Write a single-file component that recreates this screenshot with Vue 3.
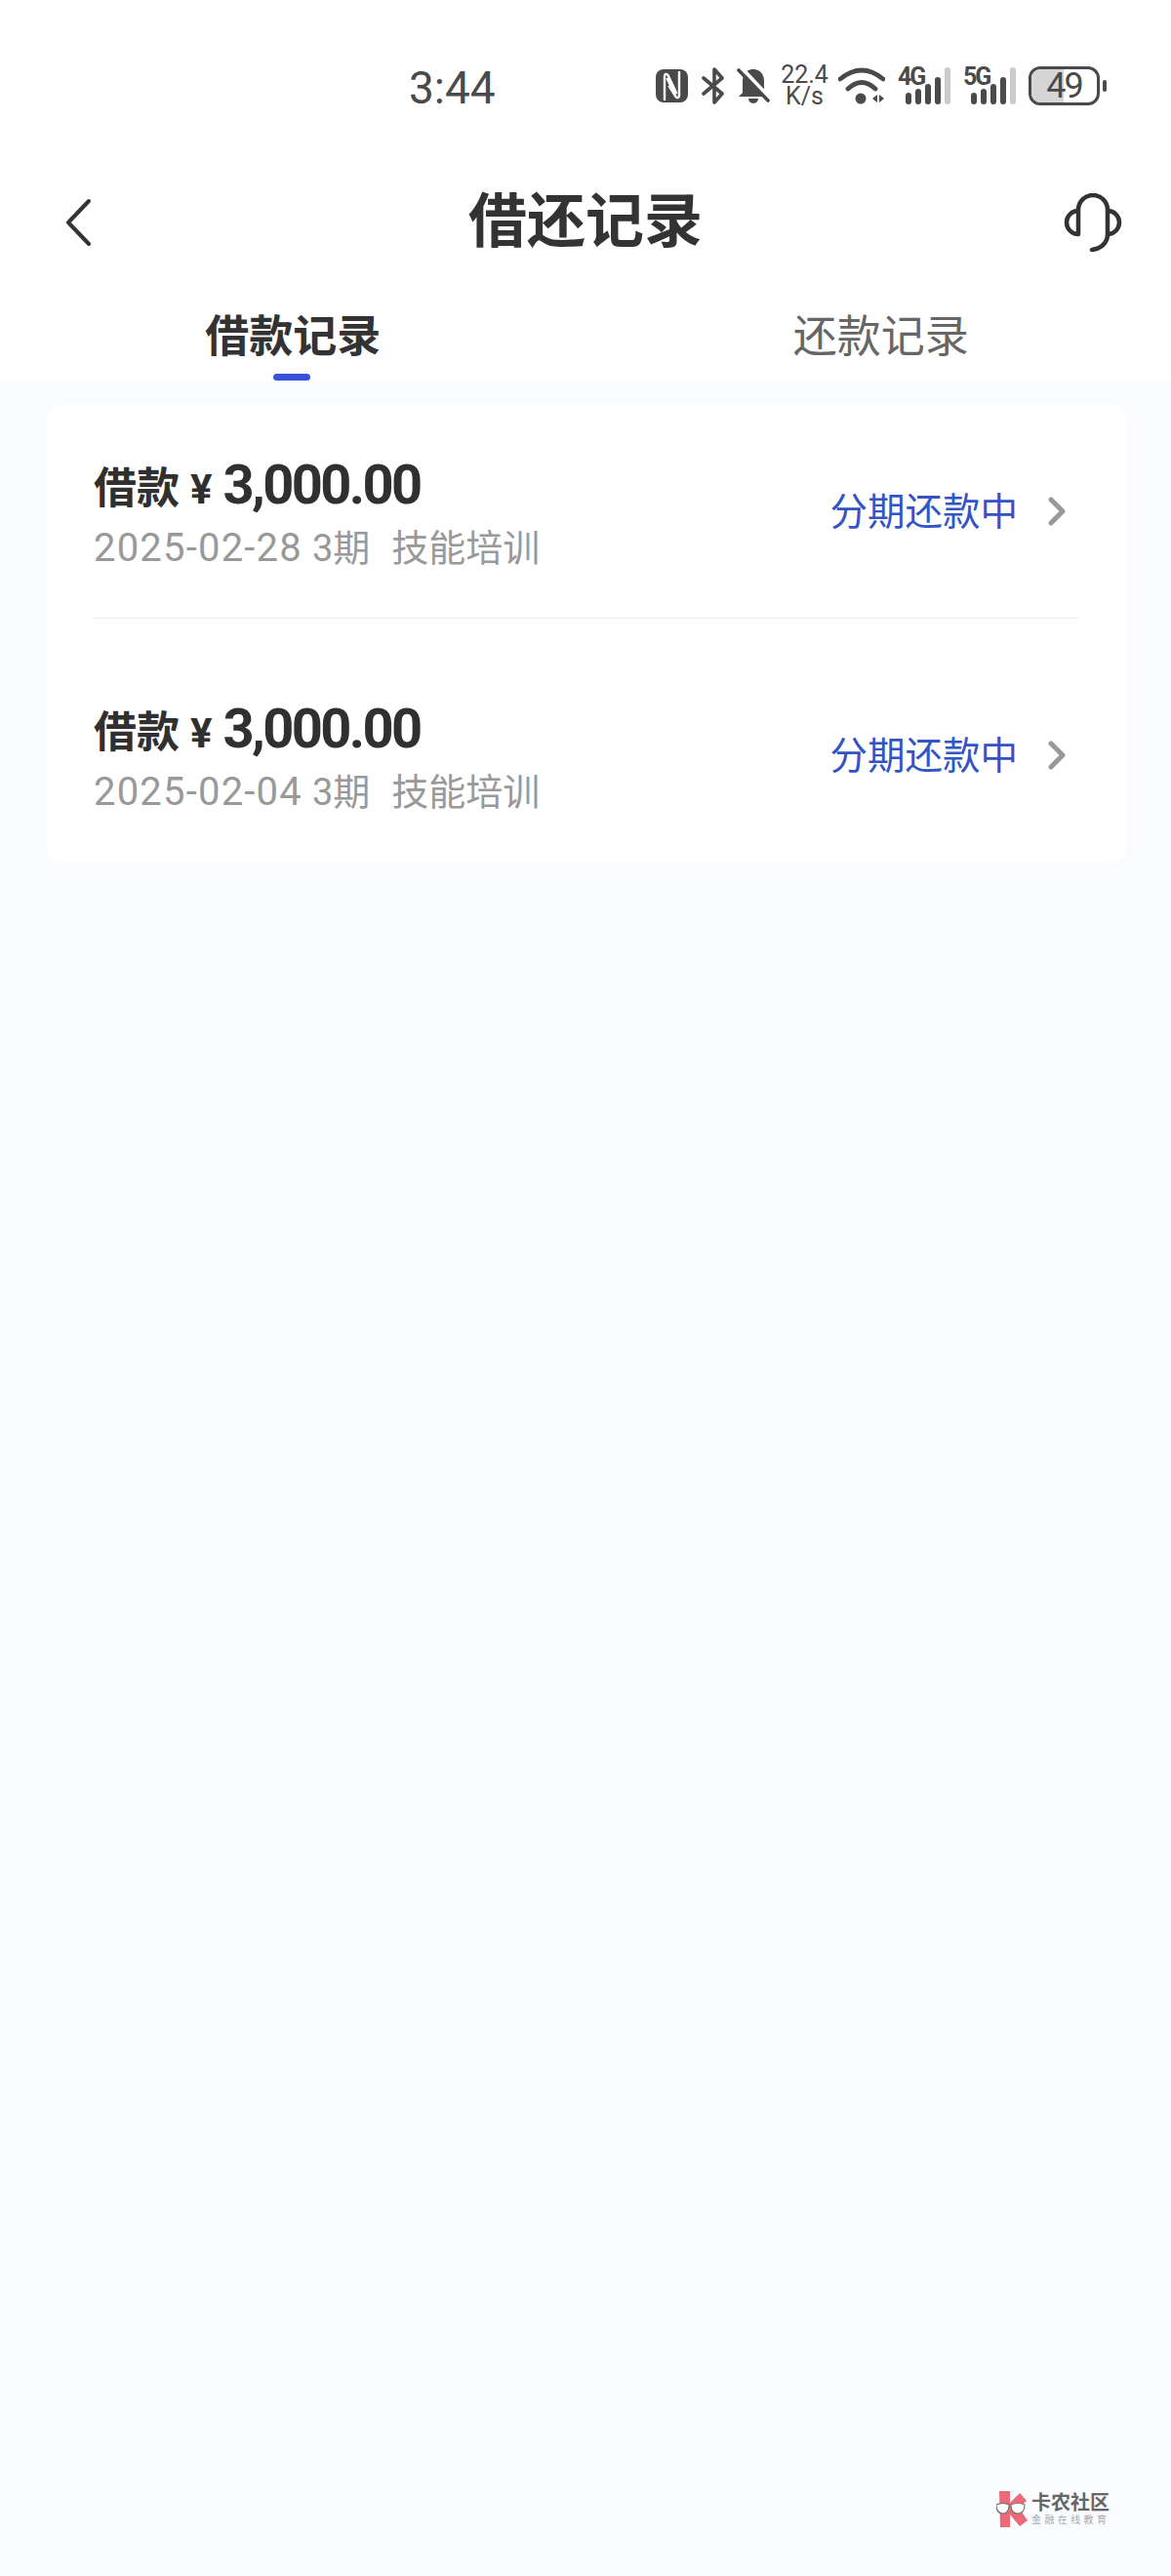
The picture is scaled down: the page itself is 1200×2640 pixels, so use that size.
<template>
  <div class="page">
    <header class="head">
      <div class="status">
        <span class="clock">3:44</span>
        <div class="status-icons">
          <!-- nfc -->
          <svg class="nfc" width="33" height="36" viewBox="0 0 33 36">
            <rect x="0" y="1" width="33" height="34" rx="8" fill="#4a4a4a" />
            <path d="M9 33V8c0-2 2-3 3.500-1l9 19M24 3v25c0 2-2 3-3.500 1l-9-19" fill="none" stroke="#fff" stroke-width="2.400" />
            <path d="M13 18l7 11M13 12l7 11" fill="none" stroke="#fff" stroke-width="1.500" />
          </svg>
          <!-- bluetooth -->
          <svg width="23" height="38" viewBox="0 0 23 38">
            <path d="M2 11l19 16-8 9V2l8 9L2 27" fill="none" stroke="#4a4a4a" stroke-width="3.600" stroke-linejoin="round" stroke-linecap="round" />
          </svg>
          <!-- muted bell -->
          <svg class="bell" width="34" height="38" viewBox="0 0 34 38">
            <path d="M17 2c7 0 11 5 11 12v12l4 4H2l4-4V14C6 7 10 2 17 2z" fill="#4a4a4a" />
            <path d="M12 32h10a5 5 0 0 1-10 0z" fill="#4a4a4a" />
            <path d="M1 -2l32 34" stroke="#fff" stroke-width="6" />
            <path d="M2 3l30 31" stroke="#4a4a4a" stroke-width="3.600" stroke-linecap="round" />
          </svg>
          <div class="speed"><span>22.4</span><span>K/s</span></div>
          <!-- wifi -->
          <svg class="wifi" width="48" height="38" viewBox="0 0 48 38">
            <path d="M2 12Q24 -6 46 12M10 22Q24 9 38 22" fill="none" stroke="#4a4a4a" stroke-width="4.800" stroke-linecap="round" />
            <circle cx="23" cy="32" r="5.500" fill="#4a4a4a" />
            <path d="M35 32l5-4v8zM42 28l5 4-5 4z" fill="#4a4a4a" />
          </svg>
          <div v-for="net in networks" :key="net" class="signal">
            <span class="net">{{ net }}</span>
            <svg width="46" height="38" viewBox="0 0 46 38">
              <rect x="0" y="26" width="6" height="12" rx="3" fill="#4a4a4a" />
              <rect x="10" y="22" width="6" height="16" rx="3" fill="#4a4a4a" />
              <rect x="20" y="17" width="6" height="21" rx="3" fill="#4a4a4a" />
              <rect x="30" y="10" width="6" height="28" rx="3" fill="#4a4a4a" />
              <rect x="40" y="0" width="6" height="38" rx="3" fill="#cbcbcb" />
            </svg>
          </div>
          <div class="battery">
            <div class="battery-body">
              <div class="battery-level"></div>
              <span class="battery-text">49</span>
            </div>
            <div class="battery-tip"></div>
          </div>
        </div>
      </div>

      <div class="nav">
        <svg class="back" width="30" height="50" viewBox="0 0 30 50">
          <path d="M25 3L4 25l21 22" fill="none" stroke="#333" stroke-width="4" stroke-linecap="round" stroke-linejoin="round" />
        </svg>
        <h1 class="title">借还记录</h1>
        <svg class="service" width="60" height="60" viewBox="0 0 60 60">
          <path d="M15 42V17a15 15 0 0 1 30 0v25c0 9-7 15-16 16" fill="none" stroke="#333" stroke-width="4.500" stroke-linecap="round" />
          <path d="M15 18a12 12 0 0 0 0 24M45 18a12 12 0 0 1 0 24" fill="none" stroke="#333" stroke-width="4.500" />
        </svg>
      </div>

      <div class="tabs">
        <div class="tab active">借款记录<i class="indicator"></i></div>
        <div class="tab second">还款记录</div>
      </div>
    </header>

    <main class="body">
      <div class="card">
        <div v-for="item in records" :key="item.date" class="row">
          <div class="info">
            <div class="amount">
              <span class="label">借款</span>
              <span class="yen">¥</span>
              <span class="money">3,000.00</span>
            </div>
            <div class="meta">
              <span class="date">{{ item.date }}</span>
              <span class="term">3期</span>
              <span class="purpose">技能培训</span>
            </div>
          </div>
          <div class="state">分期还款中</div>
          <svg class="arrow" width="20" height="32" viewBox="0 0 20 32">
            <path d="M4 4l12 12L4 28" fill="none" stroke="#999" stroke-width="5" stroke-linecap="round" stroke-linejoin="round" />
          </svg>
        </div>
      </div>

      <div class="watermark">
        <svg width="32" height="38" viewBox="0 0 32 38">
          <path d="M3 1h11v12L24 3l7 8-8 7 9 13-8 6-10-12v13H4z" fill="#ec6a77" />
          <path d="M0 15c4-2 9-2 13 0 0 6-2 9-6 9s-7-3-7-9zM15 15c4-2 10-2 14 0 0 6-3 9-7 9s-7-3-7-9z" fill="#fff" stroke="#777" stroke-width="1.200" />
        </svg>
        <div class="mark-text">
          <span class="mark-name">卡农社区</span>
          <span class="mark-sub">金融在线教育</span>
        </div>
      </div>
    </main>
  </div>
</template>

<script setup>
const networks = ['4G', '5G']
const records = [{ date: '2025-02-28' }, { date: '2025-02-04' }]
</script>

<style>
html,
body {
  margin: 0;
  background: #f9fbfe;
}
</style>

<style scoped>
.page {
  width: 1200px;
  height: 2640px;
  display: flex;
  flex-direction: column;
  background: #f9fbfe;
  font-family: "Roboto", "Noto Sans CJK SC", sans-serif;
  color: #333;
  overflow: hidden;
}

.head {
  background: #fff;
  height: 390px;
  flex: none;
}

.status {
  height: 170px;
  display: flex;
  align-items: flex-start;
  padding: 60px 66px 0 419px;
  box-sizing: border-box;
}

.clock {
  font-size: 46px;
  line-height: 60px;
  color: #4a4a4a;
}

.status-icons {
  margin-left: auto;
  margin-top: -2px;
  height: 60px;
  display: flex;
  align-items: center;
  gap: 13px;
}

.nfc {
  margin-right: 1px;
}

.bell {
  margin-right: -2px;
}

.wifi {
  margin-left: -3px;
}

.speed {
  display: flex;
  flex-direction: column;
  align-items: center;
  font-size: 25px;
  line-height: 22px;
  color: #4a4a4a;
  width: 49px;
}

.signal {
  position: relative;
  width: 54px;
  height: 38px;
  display: flex;
  justify-content: flex-end;
}

.net {
  position: absolute;
  left: 0;
  top: -1px;
  font-size: 25px;
  font-weight: 700;
  line-height: 22px;
  letter-spacing: -2px;
  color: #4a4a4a;
}

.battery {
  display: flex;
  align-items: center;
  gap: 3px;
}

.battery-body {
  position: relative;
  width: 73px;
  height: 40px;
  border: 3px solid #4a4a4a;
  border-radius: 12px;
  box-sizing: border-box;
  overflow: hidden;
  display: flex;
  align-items: center;
  justify-content: center;
}

.battery-level {
  position: absolute;
  left: 0;
  top: 0;
  bottom: 0;
  width: 49%;
  background: #d5d5d5;
}

.battery-text {
  position: relative;
  font-size: 36px;
  line-height: 34px;
  letter-spacing: -2px;
  color: #4a4a4a;
}

.battery-tip {
  width: 4px;
  height: 12px;
  border-radius: 2px;
  background: #4a4a4a;
}

.nav {
  height: 100px;
  margin-top: 8px;
  display: grid;
  grid-template-columns: 1fr auto 1fr;
  align-items: center;
  padding: 0 50px;
}

.back {
  margin-left: 16px;
}

.service {
  justify-self: end;
}

.title {
  margin: 0;
  font-size: 60px;
  font-weight: 700;
  line-height: 100px;
  color: #333;
}

.tabs {
  display: flex;
  height: 112px;
  padding-top: 35px;
  box-sizing: border-box;
}

.tab {
  position: relative;
  flex: 1;
  height: 66px;
  text-align: center;
  font-size: 45px;
  line-height: 66px;
  color: #666;
}

.tab.active {
  font-weight: 700;
  color: #333;
  padding-left: 3px;
}

.tab.second {
  padding-left: 8px;
}

.indicator {
  position: absolute;
  left: 50%;
  bottom: -11px;
  width: 38px;
  height: 7px;
  margin-left: -19px;
  border-radius: 4px;
  background: #3752d8;
}

.body {
  flex: 1;
  position: relative;
  padding: 25px 45px 0 48px;
}

.card {
  background: #fff;
  border-radius: 14px;
  padding: 0 48px;
  height: 469px;
  box-sizing: border-box;
}

.row {
  height: 218px;
  margin-bottom: 31px;
  display: flex;
  align-items: center;
}

.row:first-child {
  border-bottom: 1px solid #eef0f2;
}

.row:last-child {
  margin-bottom: 0;
}

.info {
  flex: 1;
  padding-top: 5px;
}

.amount {
  display: flex;
  align-items: baseline;
  color: #303030;
  font-weight: 700;
  height: 62px;
  line-height: 62px;
}

.label {
  font-size: 44px;
}

.yen {
  font-size: 42px;
  margin-left: 11px;
}

.money {
  font-size: 56px;
  letter-spacing: -2.600px;
  margin-left: 11px;
}

.meta {
  font-size: 38px;
  line-height: 52px;
  color: #999;
  margin-top: 8px;
}

.date {
  font-size: 40px;
  letter-spacing: 1.200px;
}

.term {
  margin-left: 10px;
}

.purpose {
  margin-left: 22px;
}

.state {
  font-size: 38.500px;
  color: #3354c4;
  margin-right: 30px;
  padding-bottom: 6px;
}

.arrow {
  margin-right: 14px;
}

.watermark {
  position: absolute;
  left: 1021px;
  top: 2162px;
  display: flex;
  align-items: center;
  gap: 4px;
}

.mark-text {
  display: flex;
  flex-direction: column;
}

.mark-name {
  font-size: 20px;
  line-height: 22px;
  font-weight: 700;
  color: #666;
}

.mark-sub {
  font-size: 10px;
  line-height: 13px;
  letter-spacing: 3.400px;
  color: #aaa;
}
</style>
